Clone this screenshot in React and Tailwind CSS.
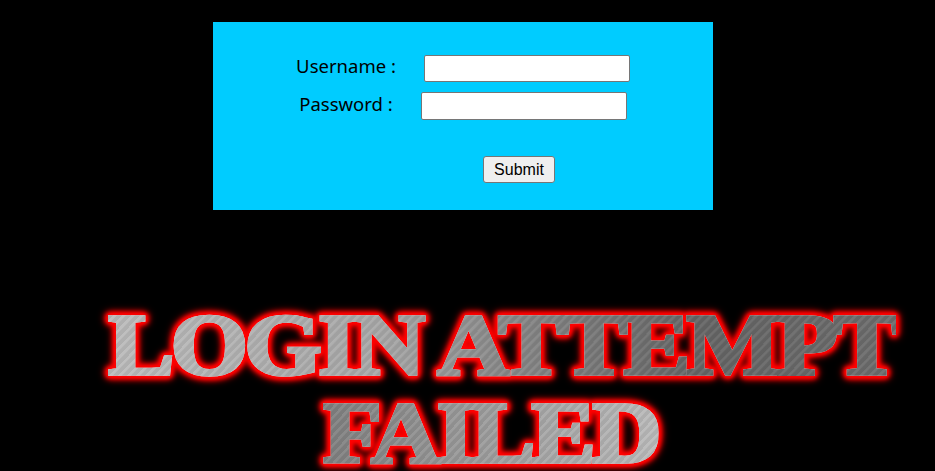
// App.jsx — login form with the failed-attempt banner underneath

function Field({ label, type, inputHeight }) {
  return (
    <div className="flex items-center justify-center gap-7">
      <label className="text-[18.5px] leading-[18px] pb-[5px] text-black">{label}</label>
      <input type={type} className={`w-[206px] ${inputHeight} bg-white border border-[#767676] rounded-[2px]`} />
    </div>
  )
}

export default function App() {
  return (
    <div className="w-[935px] h-[471px] overflow-hidden bg-black font-['Noto_Sans',sans-serif]">
      <div className="ml-[213px] pt-[22px]">
        <form className="w-[500px] h-[188px] bg-[#00ccff] pt-[33px] flex flex-col">
          <Field label="Username :" type="text" inputHeight="h-[27px]" />
          <div className="mt-[10px]">
            <Field label="Password :" type="password" inputHeight="h-[28px]" />
          </div>
          <button
            type="button"
            className="mt-[36px] ml-[270px] w-[72px] h-[27px] bg-[#efefef] border border-[#767676] rounded-[3px] text-[16px] leading-none text-black font-['Liberation_Sans',sans-serif]"
          >
            Submit
          </button>
        </form>
      </div>

      {/* banner is real text: metal gradient clipped to the letters, red glow from filters */}
      <div className="mt-[92px] flex flex-col font-['Liberation_Serif',serif] font-bold text-[86px] tracking-[-3px] text-transparent [filter:drop-shadow(0_0_0.5px_#e8e8e8)_drop-shadow(0_0_1px_#ff0000)_drop-shadow(0_0_1.5px_#ff0000)_drop-shadow(0_0_2px_#ff0000)_drop-shadow(0_0_2px_#ff0000)_drop-shadow(0_0_3px_#ff0000)]">
        <div className="ml-[108px] w-fit leading-[87px] whitespace-nowrap origin-left scale-x-[1.154] [-webkit-text-stroke:3.5px_transparent] bg-clip-text bg-[repeating-linear-gradient(130deg,rgba(255,255,255,0.06)_0px,rgba(255,255,255,0.06)_2px,rgba(0,0,0,0.06)_3px,rgba(0,0,0,0.06)_6px),linear-gradient(90deg,#bdbdbd_0%,#a8a8a8_35%,#8a8a8a_50%,#666666_75%,#6e6e6e_100%)]">
          LOGIN ATTEMPT
        </div>
        <div className="ml-[323px] mt-[9px] w-fit leading-[70px] whitespace-nowrap origin-left scale-x-[1.115] [-webkit-text-stroke:3.5px_transparent] bg-clip-text bg-[repeating-linear-gradient(130deg,rgba(255,255,255,0.06)_0px,rgba(255,255,255,0.06)_2px,rgba(0,0,0,0.06)_3px,rgba(0,0,0,0.06)_6px),linear-gradient(90deg,#808080_0%,#999999_40%,#bcbcbc_100%)]">
          FAILED
        </div>
      </div>
    </div>
  )
}
